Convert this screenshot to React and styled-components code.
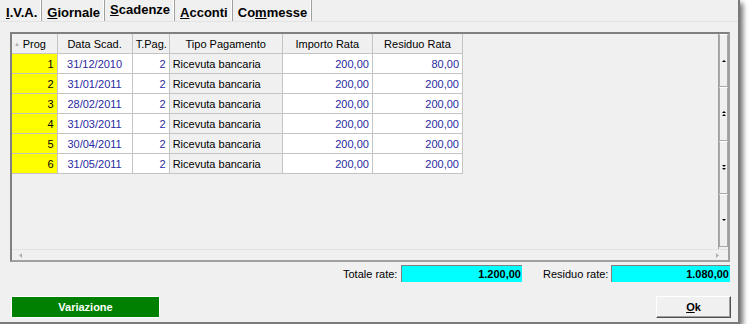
import React from 'react'
import styled, { createGlobalStyle } from 'styled-components'

const GlobalStyle = createGlobalStyle`
  html, body {
    margin: 0;
    padding: 0;
    background: #ffffff;
  }
  body {
    font-family: "Liberation Sans", Arial, sans-serif;
    font-size: 11px;
    color: #000;
  }
`

const Window = styled.div`
  width: 738px;
  height: 322px;
  background: #f0f0f0;
  border-right: 2px solid #7a7a7a;
  border-bottom: 2px solid #7a7a7a;
  box-shadow: 3px 3px 5px rgba(0, 0, 0, 0.55);
  display: flex;
  flex-direction: column;
`

const TabBar = styled.div`
  display: flex;
  align-items: flex-start;
  height: 21px;
  padding-left: 1px;
  border-bottom: 1px solid #e3e3e3;
`

const Tab = styled.div`
  font-size: 13px;
  font-weight: bold;
  height: 21px;
  line-height: ${p => (p.$active ? '19px' : '25px')};
  padding: 0 4px 0 5px;
  border-right: 1px solid #a0a0a0;
  box-shadow: inset -1px 0 0 #ffffff;
  color: #000;
  u {
    text-decoration: underline;
    text-underline-offset: 1px;
  }
`

const Grid = styled.div`
  margin: 10px 0 0 10px;
  width: 716px;
  height: 226px;
  border: 2px solid;
  border-color: #808080 #a0a0a0 #a0a0a0 #808080;
  display: flex;
  flex-direction: column;
  background: #f0f0f0;
`

const GridMain = styled.div`
  flex: 1;
  display: flex;
  min-height: 0;
`

const TableArea = styled.div`
  flex: 1;
`

const Table = styled.table`
  border-collapse: collapse;
  table-layout: fixed;
  width: 451px;
  td, th {
    height: 19px;
    padding: 0 3px;
    border: 1px solid #c4c4c4;
    white-space: nowrap;
    overflow: hidden;
    font-size: 11px;
  }
  tr:first-child th {
    border-top: none;
  }
  tr td:first-child, tr th:first-child {
    border-left: none;
  }
`

const HeadCell = styled.th`
  font-weight: normal;
  background: #f0f0f0;
  text-align: center;
  position: relative;
`

const SortMark = styled.span`
  position: absolute;
  left: 2px;
  top: 7px;
  font-size: 6px;
  color: #b0b0b0;
`

const Cell = styled.td`
  background: ${p => p.$bg || '#ffffff'};
  color: ${p => p.$color || '#2a2aa0'};
  text-align: ${p => p.$align || 'right'};
`

const VScroll = styled.div`
  width: 9px;
  display: flex;
  flex-direction: column;
  border-left: 1px solid #a0a0a0;
  padding-bottom: 2px;
`

const ScrollBtn = styled.div`
  flex: 1;
  border: 1px solid #a8a8a8;
  border-top-color: #ffffff;
  background: #f0f0f0;
  display: flex;
  align-items: center;
  justify-content: center;
`

const HScroll = styled.div`
  height: 10px;
  border-top: 1px solid #e3e3e3;
  display: flex;
  align-items: center;
  justify-content: space-between;
  padding: 0 9px 0 7px;
`

const TotalsRow = styled.div`
  display: flex;
  align-items: center;
  margin-top: 3px;
  height: 17px;
  padding-left: 343px;
`

const Label = styled.span`
  font-size: 11px;
  width: ${p => p.$w}px;
`

const ValueBox = styled.div`
  width: ${p => p.$w}px;
  height: 17px;
  box-sizing: border-box;
  background: #00ffff;
  border-top: 1px solid #808080;
  border-left: 1px solid #808080;
  text-align: right;
  font-weight: bold;
  font-size: 11px;
  line-height: 16px;
  padding-right: 1px;
  margin-right: ${p => p.$mr || 0}px;
`

const ButtonRow = styled.div`
  display: flex;
  justify-content: space-between;
  margin-top: 14px;
  padding: 0 7px 0 11px;
`

const GreenButton = styled.div`
  width: 149px;
  height: 22px;
  background: #008000;
  border: 1px solid #ffffff;
  box-sizing: border-box;
  color: #ffffff;
  font-weight: bold;
  font-size: 11px;
  display: flex;
  align-items: center;
  justify-content: center;
`

const OkButton = styled.div`
  width: 75px;
  height: 22px;
  box-sizing: border-box;
  border: 1px solid;
  border-color: #ffffff #505050 #505050 #ffffff;
  box-shadow: inset -1px -1px 0 #a0a0a0;
  background: #f0f0f0;
  font-weight: bold;
  font-size: 11px;
  display: flex;
  align-items: center;
  justify-content: center;
`

// tiny scroll arrows, 4px wide / 2px high triangles
const Arrow = ({ dir = 'up', double }) => (
  <svg width="4" height={double ? 5 : 2} viewBox={double ? '0 0 4 5' : '0 0 4 2'}>
    {dir === 'up' ? (
      <>
        <path d="M2 0 L4 2 L0 2 Z" fill="#000" />
        {double && <path d="M2 3 L4 5 L0 5 Z" fill="#000" />}
      </>
    ) : (
      <>
        <path d="M0 0 L4 0 L2 2 Z" fill="#000" />
        {double && <path d="M0 3 L4 3 L2 5 Z" fill="#000" />}
      </>
    )}
  </svg>
)

const SmallArrow = ({ dir }) => (
  <svg width="3" height="5" viewBox="0 0 3 5">
    <path d={dir === 'left' ? 'M3 0 L0 2.5 L3 5 Z' : 'M0 0 L3 2.5 L0 5 Z'} fill="#b0b0b0" />
  </svg>
)

const rows = [
  { prog: 1, data: '31/12/2010', residuo: '80,00' },
  { prog: 2, data: '31/01/2011', residuo: '200,00' },
  { prog: 3, data: '28/02/2011', residuo: '200,00' },
  { prog: 4, data: '31/03/2011', residuo: '200,00' },
  { prog: 5, data: '30/04/2011', residuo: '200,00' },
  { prog: 6, data: '31/05/2011', residuo: '200,00' },
]

const tabs = [
  { u: 'I', rest: '.V.A.' },
  { u: 'G', rest: 'iornale' },
  { u: 'S', rest: 'cadenze', active: true },
  { u: 'A', rest: 'cconti' },
  { pre: 'Co', u: 'm', rest: 'messe' },
]

export default function App() {
  return (
    <>
      <GlobalStyle />
      <Window>
        <TabBar>
          {tabs.map((t, i) => (
            <Tab key={i} $active={t.active}>
              {t.pre}<u>{t.u}</u>{t.rest}
            </Tab>
          ))}
        </TabBar>

        <Grid>
          <GridMain>
            <TableArea>
              <Table>
                <colgroup>
                  <col style={{ width: 45 }} />
                  <col style={{ width: 75 }} />
                  <col style={{ width: 37 }} />
                  <col style={{ width: 113 }} />
                  <col style={{ width: 90 }} />
                  <col style={{ width: 90 }} />
                </colgroup>
                <thead>
                  <tr>
                    <HeadCell><SortMark>▲</SortMark>Prog</HeadCell>
                    <HeadCell>Data Scad.</HeadCell>
                    <HeadCell>T.Pag.</HeadCell>
                    <HeadCell>Tipo Pagamento</HeadCell>
                    <HeadCell>Importo Rata</HeadCell>
                    <HeadCell>Residuo Rata</HeadCell>
                  </tr>
                </thead>
                <tbody>
                  {rows.map(r => (
                    <tr key={r.prog}>
                      <Cell $bg="#ffff00" $color="#000">{r.prog}</Cell>
                      <Cell $align="center">{r.data}</Cell>
                      <Cell>2</Cell>
                      <Cell $bg="#f0f0f0" $color="#000" $align="left">Ricevuta bancaria</Cell>
                      <Cell>200,00</Cell>
                      <Cell>{r.residuo}</Cell>
                    </tr>
                  ))}
                </tbody>
              </Table>
            </TableArea>
            <VScroll>
              <ScrollBtn><Arrow dir="up" /></ScrollBtn>
              <ScrollBtn><Arrow dir="up" double /></ScrollBtn>
              <ScrollBtn><Arrow dir="down" double /></ScrollBtn>
              <ScrollBtn><Arrow dir="down" /></ScrollBtn>
            </VScroll>
          </GridMain>
          <HScroll>
            <SmallArrow dir="left" />
            <SmallArrow dir="right" />
          </HScroll>
        </Grid>

        <TotalsRow>
          <Label $w={58}>Totale rate:</Label>
          <ValueBox $w={121} $mr={21}>1.200,00</ValueBox>
          <Label $w={68}>Residuo rate:</Label>
          <ValueBox $w={119}>1.080,00</ValueBox>
        </TotalsRow>

        <ButtonRow>
          <GreenButton>Variazione</GreenButton>
          <OkButton><span><u>O</u>k</span></OkButton>
        </ButtonRow>
      </Window>
    </>
  )
}
